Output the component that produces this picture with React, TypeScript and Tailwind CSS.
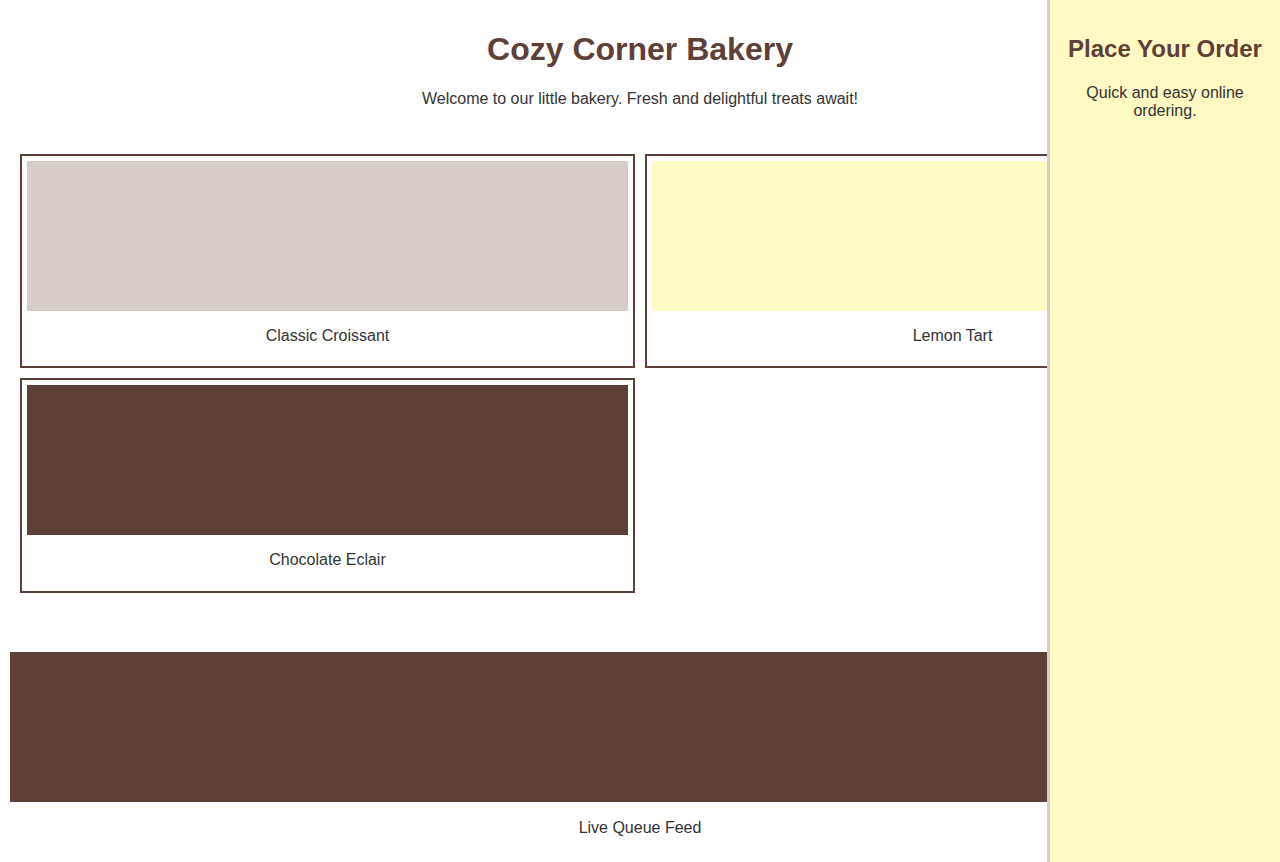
const products = [
  { name: "Classic Croissant", swatch: "bg-[#d7ccc8]" },
  { name: "Lemon Tart", swatch: "bg-[#fff9c4]" },
  { name: "Chocolate Eclair", swatch: "bg-[#5d4037]" },
];

function ProductCard({ name, swatch }: { name: string; swatch: string }) {
  return (
    <div className="border-2 border-[#5d4037] bg-white p-[5px] text-center">
      <div className={`h-[150px] w-full ${swatch}`} />
      <p className="my-4 leading-[18.4px]">{name}</p>
    </div>
  );
}

export default function App() {
  return (
    <div className="min-h-screen bg-white font-['Liberation_Sans',Arial,sans-serif] text-[16px] text-[#333]">
      <header className="text-center">
        <h1 className="mb-[22px] pt-[31px] text-[32px] leading-[36.8px] font-bold text-[#5d4037]">
          Cozy Corner Bakery
        </h1>
        <p className="leading-[18.4px]">
          Welcome to our little bakery. Fresh and delightful treats await!
        </p>
      </header>

      <main className="grid grid-cols-2 gap-[10px] px-5 pt-[45.6px]">
        {products.map((p) => (
          <ProductCard key={p.name} name={p.name} swatch={p.swatch} />
        ))}
      </main>

      <section className="mt-[59.4px] px-[10px] text-center">
        <div className="h-[150px] w-full bg-[#5d4037]" />
        <p className="mt-[17px] leading-[18.4px]">Live Queue Feed</p>
      </section>

      {/* order sidebar sits over the page on the right */}
      <aside className="fixed top-0 right-0 h-screen w-[233px] border-l-[3px] border-[#d7ccc8] bg-[#fff9c4] px-[15px] pt-[35px] text-center">
        <h2 className="text-[24px] leading-[27.6px] font-bold whitespace-nowrap text-[#5d4037]">
          Place Your Order
        </h2>
        <p className="mt-[21px] leading-[18.4px]">Quick and easy online ordering.</p>
      </aside>
    </div>
  );
}
